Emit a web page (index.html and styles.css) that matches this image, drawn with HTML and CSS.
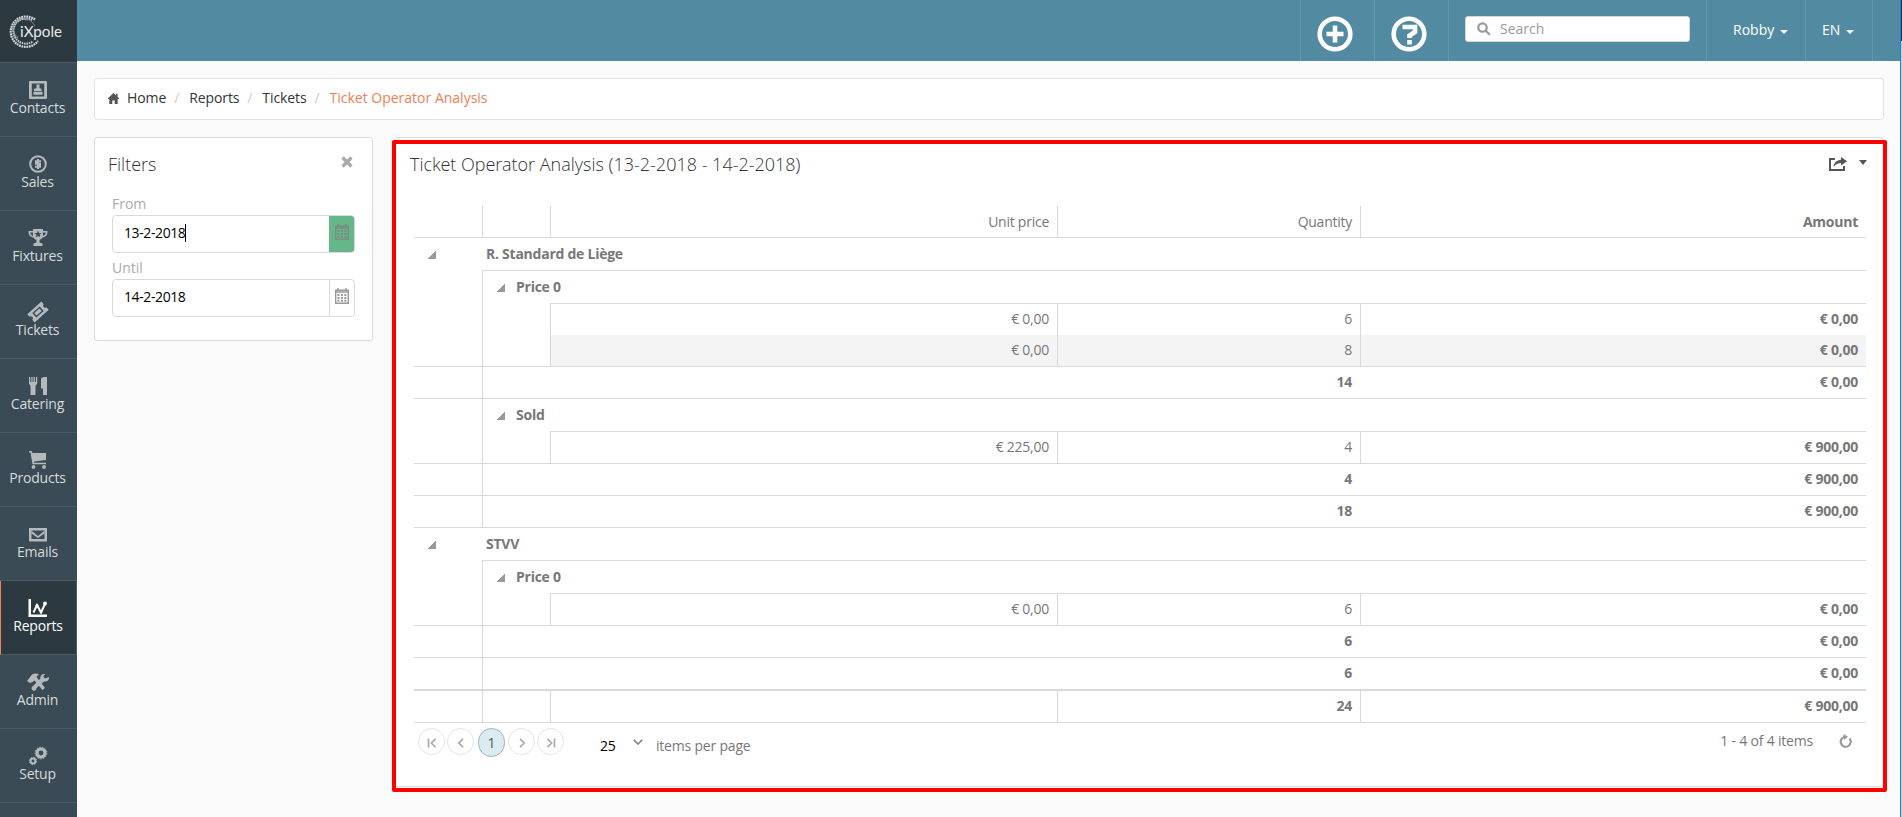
FILE: index.html
```
<!DOCTYPE html>
<html lang="en">
<head>
    <meta charset="UTF-8">
    <meta name="viewport" content="width=device-width, initial-scale=1.0">
    <title>iXpole - Ticket Operator Analysis</title>
    <link rel="stylesheet" href="styles.css">
</head>
<body>
    <div class="app">
        <aside class="sidebar">
            <a class="logo" href="#">
                <svg width="77" height="62" viewBox="0 0 77 62">
                    <g fill="none" stroke="#d3d8da">
                        <path d="M35 19.500A15.200 15.200 0 1 0 38 41" stroke-width="2.200" stroke-dasharray="1.800 .7"/>
                        <path d="M32 20A12.600 12.600 0 1 0 33 41.500" stroke-width="2" stroke-dasharray="1.600 .7" stroke="#c2c8cb"/>
                        <path d="M28 20A10.300 10.300 0 0 0 18 38" stroke-width="1.800" stroke-dasharray="1.300 .7" stroke="#9aa4a9"/>
                        <path d="M24 18Q31 19 35 26" stroke-width="1" stroke="#7f8b91"/>
                    </g>
                    <text class="logo-text" x="20" y="37" textLength="42" lengthAdjust="spacingAndGlyphs">iXpole</text>
                </svg>
            </a>
            <nav class="menu">
                <a href="#" class="menu-item">
                    <svg viewBox="0 0 18 18"><path fill-rule="evenodd" d="M1 0h16a1 1 0 0 1 1 1v16a1 1 0 0 1-1 1H1a1 1 0 0 1-1-1V1a1 1 0 0 1 1-1zm1.800 2.500v13h12.400v-13z"/><path d="M7.500 3.500h3v3.500l2 1v2H5V8l2.500-1zM4.500 10.800h9v3h-9z"/></svg>
                    <span>Contacts</span>
                </a>
                <a href="#" class="menu-item">
                    <svg viewBox="0 0 18 18"><circle cx="9" cy="9" r="7.800" class="line"/><path class="line" d="M12 6.200H7v2.600h4v2.900H6M9 4v10"/></svg>
                    <span>Sales</span>
                </a>
                <a href="#" class="menu-item">
                    <svg viewBox="0 0 18 18"><path fill-rule="evenodd" d="M4 0h10v2h4.500c0 4-1.500 6-5 6.500-1 1.500-2 2-3 2.500v2.500l3 1V17H4.500v-2.500l3-1V11c-1-.5-2-1-3-2.500C1 8-.5 6-.5 2H4zM1.200 3.500C1.500 5.500 2.500 6.500 4 7V3.500zM14 3.500V7c1.500-.5 2.500-1.500 2.800-3.500z"/><path class="cut" d="M9 1.500l1 2.400 2.600.2-2 1.700.7 2.500L9 7l-2.300 1.300.7-2.500-2-1.700 2.600-.2z"/></svg>
                    <span>Fixtures</span>
                </a>
                <a href="#" class="menu-item">
                    <svg viewBox="0 0 18 18"><g transform="rotate(-42 9 9)"><path fill-rule="evenodd" d="M-.5 3.500h19V7a2 2 0 0 0 0 4v3.500h-19V11a2 2 0 0 0 0-4zM4 6v6h10V6z"/><path d="M5.500 7.300h7v3.400h-7z"/></g></svg>
                    <span>Tickets</span>
                </a>
                <a href="#" class="menu-item">
                    <svg viewBox="0 0 18 18"><path d="M0 0h1.300v5h1V0h1.300v5h1V0h1.300v5h1V0h1.300v6.500L6.500 9v9h-5V9L0 6.500zM12 2.500C12 1 13.500 0 15 0h3v18h-4v-6.500h-2z"/></svg>
                    <span>Catering</span>
                </a>
                <a href="#" class="menu-item">
                    <svg viewBox="0 0 18 18"><path d="M0 0h2.800l.6 2H17v7L5 10.500l.2 1.300H17v1.500H3.500L1.500 1.500H0z"/><circle cx="4.500" cy="16" r="1.900"/><circle cx="15" cy="16" r="1.900"/></svg>
                    <span>Products</span>
                </a>
                <a href="#" class="menu-item">
                    <svg viewBox="0 0 18 18"><path fill-rule="evenodd" d="M0 3h18v13.500H0zm2.500 2.500V14h13V5.500z"/><path d="M2.500 5.800L9 11l6.500-5.200v2.700L9 13 2.500 8.500z"/></svg>
                    <span>Emails</span>
                </a>
                <a href="#" class="menu-item active">
                    <svg viewBox="0 0 18 18"><path d="M-.5 0H2v15.500h16V18H-.5z"/><path class="line" d="M4.500 13.500L8 6l4 7.500 4-8.500"/><circle cx="8" cy="6.500" r="1.500"/><circle cx="12" cy="13" r="1.300"/><circle cx="16" cy="4.500" r="1.900"/></svg>
                    <span>Reports</span>
                </a>
                <a href="#" class="menu-item">
                    <svg viewBox="0 0 18 18"><path d="M-2 8l5-6.500Q6 0 10 1L7.500 4l7.500 9.500 1 1.500-2.500 2L5.500 7.500 3.500 9 1 10z"/><path d="M4 13l7.500-7.500C11 2.500 13 .5 16.500 1L14 3.500l2 2L20 4c.5 3-2 5-5 4.500L7.500 15A2.500 2.500 0 1 1 4 13z"/></svg>
                    <span>Admin</span>
                </a>
                <a href="#" class="menu-item">
                    <svg viewBox="0 0 18 18"><circle cx="12" cy="6" r="4" class="gear"/><circle cx="12" cy="6" r="5.900" class="teeth"/><circle cx="4" cy="14" r="2.400" class="gear gear-sm"/><circle cx="4" cy="14" r="3.600" class="teeth"/></svg>
                    <span>Setup</span>
                </a>
            </nav>
        </aside>

        <div class="page">
            <header class="topbar">
                <a href="#" class="top-icon">
                    <svg width="36" height="36" viewBox="0 0 36 36"><circle cx="18" cy="18" r="15.300"/><path d="M18 9.500v17M9.500 18h17"/></svg>
                </a>
                <a href="#" class="top-icon">
                    <svg width="36" height="36" viewBox="0 0 36 36"><circle cx="18" cy="18" r="15.300"/><path d="M11.500 11h12.500v5l-5.500 3.500v2.500M18.500 24v4.500"/></svg>
                </a>
                <div class="search">
                    <div class="search-box">
                        <svg width="14" height="14" viewBox="0 0 14 14"><circle cx="5.500" cy="5.500" r="4.200"/><path d="M8.800 8.800l4 4"/></svg>
                        <span>Search</span>
                    </div>
                </div>
                <a href="#" class="top-user">Robby <i class="caret"></i></a>
                <a href="#" class="top-lang">EN <i class="caret"></i></a>
            </header>

            <ul class="breadcrumb">
                <li><svg width="11" height="11" viewBox="0 0 11 11"><path d="M5.500 0L8 2.300V.8h1.600v3L11 5.200V6H9.700v5H6.700V7.500H4.300V11H1.300V6H0v-.8z"/></svg><a href="#">Home</a></li>
                <li><a href="#">Reports</a></li>
                <li><a href="#">Tickets</a></li>
                <li class="current">Ticket Operator Analysis</li>
            </ul>

            <main class="content">
                <section class="filters">
                    <div class="filters-head">
                        <h2>Filters</h2>
                        <svg width="12" height="12" viewBox="0 0 12 12"><path d="M1.500 1.500l9 9M10.500 1.500l-9 9"/></svg>
                    </div>
                    <label>From</label>
                    <div class="datepicker focused">
                        <span class="date">13-2-2018<i class="cursor"></i></span>
                        <span class="picker-btn">
                            <svg width="14" height="16" viewBox="0 0 14 16"><path d="M.7 2.200h12.600v13H.7zM1 4h12" class="frame"/><path d="M3 0v2M11 0v2" class="frame"/><path d="M2.500 6.900h9M2.500 9.900h9M2.500 12.800h9" class="days"/></svg>
                        </span>
                    </div>
                    <label>Until</label>
                    <div class="datepicker">
                        <span class="date">14-2-2018</span>
                        <span class="picker-btn">
                            <svg width="14" height="16" viewBox="0 0 14 16"><path d="M.7 2.200h12.600v13H.7zM1 4h12" class="frame"/><path d="M3 0v2M11 0v2" class="frame"/><path d="M2.500 6.900h9M2.500 9.900h9M2.500 12.800h9" class="days"/></svg>
                        </span>
                    </div>
                </section>

                <section class="report">
                    <div class="report-head">
                        <h2>Ticket Operator Analysis (13-2-2018 - 14-2-2018)</h2>
                        <div class="report-tools">
                            <svg width="18" height="14" viewBox="0 0 18 14"><path d="M6 2H1v11h14V9" class="box"/><path d="M12 0l6 4.200-6 4.300V6C9 6 7 7 4.500 10 5 5.500 8 3 12 2.700z"/></svg>
                            <i class="caret"></i>
                        </div>
                    </div>

                    <table class="grid">
                        <colgroup>
                            <col class="col-group">
                            <col class="col-group">
                            <col class="col-price">
                            <col class="col-qty">
                            <col class="col-amount">
                        </colgroup>
                        <thead>
                            <tr>
                                <th></th>
                                <th></th>
                                <th>Unit price</th>
                                <th>Quantity</th>
                                <th class="strong">Amount</th>
                            </tr>
                        </thead>
                        <tbody>
                            <tr class="group">
                                <td><i class="toggle"></i></td>
                                <td colspan="4">R. Standard de Liège</td>
                            </tr>
                            <tr class="subgroup">
                                <td></td>
                                <td colspan="4"><i class="toggle"></i>Price 0</td>
                            </tr>
                            <tr class="item">
                                <td></td>
                                <td></td>
                                <td>€ 0,00</td>
                                <td>6</td>
                                <td>€ 0,00</td>
                            </tr>
                            <tr class="item alt">
                                <td></td>
                                <td></td>
                                <td>€ 0,00</td>
                                <td>8</td>
                                <td>€ 0,00</td>
                            </tr>
                            <tr class="total">
                                <td></td>
                                <td></td>
                                <td></td>
                                <td>14</td>
                                <td>€ 0,00</td>
                            </tr>
                            <tr class="subgroup next">
                                <td></td>
                                <td colspan="4"><i class="toggle"></i>Sold</td>
                            </tr>
                            <tr class="item">
                                <td></td>
                                <td></td>
                                <td>€ 225,00</td>
                                <td>4</td>
                                <td>€ 900,00</td>
                            </tr>
                            <tr class="total">
                                <td></td>
                                <td></td>
                                <td></td>
                                <td>4</td>
                                <td>€ 900,00</td>
                            </tr>
                            <tr class="total">
                                <td></td>
                                <td></td>
                                <td></td>
                                <td>18</td>
                                <td>€ 900,00</td>
                            </tr>
                            <tr class="group">
                                <td><i class="toggle"></i></td>
                                <td colspan="4">STVV</td>
                            </tr>
                            <tr class="subgroup">
                                <td></td>
                                <td colspan="4"><i class="toggle"></i>Price 0</td>
                            </tr>
                            <tr class="item">
                                <td></td>
                                <td></td>
                                <td>€ 0,00</td>
                                <td>6</td>
                                <td>€ 0,00</td>
                            </tr>
                            <tr class="total">
                                <td></td>
                                <td></td>
                                <td></td>
                                <td>6</td>
                                <td>€ 0,00</td>
                            </tr>
                            <tr class="total">
                                <td></td>
                                <td></td>
                                <td></td>
                                <td>6</td>
                                <td>€ 0,00</td>
                            </tr>
                        </tbody>
                        <tfoot>
                            <tr>
                                <td></td>
                                <td></td>
                                <td></td>
                                <td>24</td>
                                <td>€ 900,00</td>
                            </tr>
                        </tfoot>
                    </table>

                    <div class="pager">
                        <div class="pages">
                            <a href="#"><svg width="10" height="10" viewBox="0 0 10 10"><path d="M1.500 .5v9M8.500 .8L4.300 5l4.200 4.200"/></svg></a>
                            <a href="#"><svg width="10" height="10" viewBox="0 0 10 10"><path d="M7 .8L2.800 5 7 9.200"/></svg></a>
                            <a href="#" class="selected">1</a>
                            <a href="#"><svg width="10" height="10" viewBox="0 0 10 10"><path d="M3 .8L7.200 5 3 9.200"/></svg></a>
                            <a href="#"><svg width="10" height="10" viewBox="0 0 10 10"><path d="M8.500 .5v9M1.500 .8L5.700 5 1.500 9.200"/></svg></a>
                        </div>
                        <div class="page-size">
                            <span class="size">25</span>
                            <svg width="10" height="6" viewBox="0 0 10 6"><path d="M.8 .8L5 5 9.200 .8"/></svg>
                            <span>items per page</span>
                        </div>
                        <div class="pager-info">
                            <span>1 - 4 of 4 items</span>
                            <svg width="13" height="14" viewBox="0 0 13 14"><path d="M10.500 4.500A5 5 0 1 1 6 2.800" class="ring"/><path d="M4.500 0L9 2.800 5 6z"/></svg>
                        </div>
                    </div>
                    <div class="highlight"></div>
                </section>
            </main>
        </div>
        <div class="window-edge"></div>
    </div>
</body>
</html>
```
FILE: styles.css
```
* {
    box-sizing: border-box;
}
body {
    margin: 0;
    height: 817px;
    overflow: hidden;
    background: #fafafa;
    color: #333;
    font-family: "Open Sans", "Noto Sans", sans-serif;
    font-size: 14px;
    line-height: 19px;
}
a {
    color: inherit;
    text-decoration: none;
}
svg {
    display: block;
    flex: none;
}
.app {
    display: flex;
    height: 817px;
}

/* sidebar */
.sidebar {
    width: 77px;
    flex: none;
    background: #3a4b55;
}
.logo {
    display: block;
    height: 63px;
    background: #2c3940;
    border-bottom: 1px solid #4b5b63;
}
.logo-text {
    fill: #e6e9ea;
    font-family: "Lato", sans-serif;
    font-weight: 400;
    font-size: 15px;
}
.menu-item {
    display: flex;
    flex-direction: column;
    align-items: center;
    height: 74px;
    padding: 18px 2px 0 0;
    border-bottom: 1px solid #4b5b63;
    color: #d6dadc;
    letter-spacing: -0.2px;
}
.menu-item span {
    margin-top: -1px;
}
.menu-item svg {
    width: 18px;
    height: 18px;
    fill: #b3b9bd;
    overflow: visible;
}
.menu-item svg .line {
    fill: none;
    stroke: #b3b9bd;
    stroke-width: 2;
}
.menu-item svg .cut {
    fill: #3a4b55;
}
.menu-item svg .gear {
    fill: none;
    stroke: #b3b9bd;
    stroke-width: 3.2;
}
.menu-item svg .gear-sm {
    stroke-width: 2;
}
.menu-item svg .teeth {
    fill: none;
    stroke: #b3b9bd;
    stroke-width: 1;
    stroke-dasharray: 1.6 1.2;
}
.menu-item.active {
    padding-right: 1px;
    background: #2c3940;
    border-left: 1px solid #f0805f;
    border-right: 1px solid #4b5b63;
    color: #fff;
}
.menu-item.active svg {
    fill: #fff;
}
.menu-item.active svg .line {
    stroke: #fff;
}

/* top bar */
.page {
    width: 1823px;
    flex: none;
}
.topbar {
    display: flex;
    justify-content: flex-end;
    height: 61px;
    padding-right: 27px;
    background: #528ba1;
    color: #fff;
}
.topbar > * {
    border-left: 1px solid #6799ac;
}
.top-icon {
    width: 74px;
    padding: 16px 0 0 16px;
}
.top-icon svg {
    fill: none;
    stroke: #fff;
    stroke-width: 4.6;
}
.search {
    width: 258px;
    padding: 16px 0 0 16px;
}
.search-box {
    display: flex;
    align-items: center;
    gap: 9px;
    width: 225px;
    height: 26px;
    padding: 0 0 2px 11px;
    background: #fff;
    border: 1px solid #d5d9dc;
    border-radius: 3px;
    color: #999;
}
.search-box svg {
    margin-top: 2px;
    fill: none;
    stroke: #999;
    stroke-width: 2.2;
}
.top-user, .top-lang {
    display: flex;
    gap: 6px;
    padding-top: 20px;
}
.top-user {
    width: 99px;
    padding-left: 26px;
}
.top-lang {
    width: 68px;
    padding-left: 16px;
    border-right: 1px solid #6799ac;
}
.caret {
    width: 0;
    height: 0;
    margin-top: 10px;
    border: 0 solid transparent;
    border-width: 4px 4.5px 0;
    border-top-color: currentColor;
}

/* breadcrumb */
.breadcrumb {
    display: flex;
    height: 42px;
    margin: 17px 16px 17px 17px;
    padding: 9px 13px;
    list-style: none;
    background: #fff;
    border: 1px solid #e3e3e3;
    border-radius: 3px;
}
.breadcrumb li {
    display: flex;
}
.breadcrumb li + li::before {
    content: "/";
    width: 15px;
    padding-left: 8px;
    color: #ccc;
}
.breadcrumb svg {
    margin: 5px 8px 0 0;
    fill: #555;
}
.breadcrumb a {
    letter-spacing: -0.1px;
}
.breadcrumb .current {
    color: #ec7f58;
}

/* filters */
.content {
    display: flex;
    align-items: flex-start;
    gap: 21px;
    padding: 0 16px 0 17px;
}
.filters {
    width: 279px;
    height: 204px;
    flex: none;
    padding: 14px 17px;
    background: #fff;
    border: 1px solid #ddd;
    border-radius: 3px;
}
h2 {
    margin: 0;
    font-family: "Open Sans Light", "Open Sans", sans-serif;
    font-size: 18px;
    font-weight: 300;
    line-height: 25px;
    color: #333;
}
.filters-head {
    display: flex;
    justify-content: space-between;
    height: 42px;
    margin: 0 2px 0 -4px;
}
.filters-head svg {
    margin-top: 4px;
    fill: none;
    stroke: #aaa;
    stroke-width: 3.2;
}
.filters label {
    display: block;
    height: 21px;
    color: #aaa;
}
.datepicker {
    display: flex;
    width: 243px;
    height: 38px;
    margin-bottom: 5px;
    border: 1px solid #d9d9d9;
    border-radius: 4px;
    overflow: hidden;
}
.date {
    display: flex;
    flex: 1;
    padding: 7px 0 0 11px;
    color: #000;
    letter-spacing: -0.4px;
}
.cursor {
    width: 1px;
    height: 18px;
    margin-top: 1px;
    background: #000;
}
.picker-btn {
    width: 25px;
    padding: 8px 0 0 5px;
    border-left: 1px solid #d9d9d9;
}
.picker-btn svg {
    fill: none;
    stroke: #999;
}
.picker-btn .frame {
    stroke-width: 1.4;
}
.picker-btn .days {
    stroke-width: 2;
    stroke-dasharray: 2 1.4;
}
.focused .picker-btn {
    background: #65b688;
    border-color: #65b688;
}
.focused .picker-btn svg {
    stroke: #7b8c82;
}

/* report */
.report {
    position: relative;
    flex: 1;
    height: 650px;
    padding: 14px 17px 0 19px;
    background: #fff;
    border: 1px solid #ddd;
    border-radius: 3px;
}
.highlight {
    position: absolute;
    top: 2px;
    left: -3px;
    width: 1495px;
    height: 652px;
    border: 4px solid #f00;
    border-radius: 2px;
}
.report-head {
    display: flex;
    justify-content: space-between;
    height: 54px;
    margin: 0 -1px 0 -4px;
}
.report-tools {
    display: flex;
    gap: 12px;
    padding-top: 5px;
    color: #555;
}
.report-tools svg {
    fill: #555;
}
.report-tools .box {
    fill: none;
    stroke: #555;
    stroke-width: 2;
}
.report-tools .caret {
    margin-top: 3px;
    border-width: 5px 4.5px 0;
}
.grid {
    width: 1452px;
    table-layout: fixed;
    border-collapse: separate;
    border-spacing: 0;
    color: #777;
    letter-spacing: -0.25px;
}
.col-group {
    width: 68px;
}
.col-price {
    width: 507px;
}
.col-qty {
    width: 303px;
}
.col-amount {
    width: 506px;
}
.grid th, .grid td {
    height: 32px;
    padding: 0 8px;
    border: 0 solid #d9d9d9;
    border-top-width: 1px;
    font-weight: 400;
    line-height: 29px;
    text-align: right;
    vertical-align: top;
}
.grid th {
    height: 31px;
    border-top: 0;
    line-height: 31px;
}
.grid th + th, .grid .item td + td, .grid .subgroup td + td, .grid tfoot td + td {
    border-left-width: 1px;
}
.grid .strong, .grid td:last-child {
    font-weight: 700;
}
.grid .group td, .grid .subgroup td {
    height: 33px;
    text-align: left;
    line-height: 31px;
}
.grid .group td:first-child {
    padding-left: 14px;
}
.grid .group td:last-child {
    padding-left: 4px;
}
.grid .subgroup td:last-child {
    padding-left: 14px;
}
.grid .subgroup:not(.next) td:first-child,
.grid .item td:first-child,
.grid .item td:nth-child(2) {
    border-top-width: 0;
}
.grid .alt td {
    height: 31px;
    border-top-width: 0;
}
.alt td:nth-child(n+3) {
    background: #f4f4f4;
}
.grid .total td, .grid tfoot td {
    font-weight: 700;
}
.grid .total td:nth-child(2) {
    border-left-width: 1px;
}
.grid tfoot td {
    height: 34px;
    border-top-width: 2px;
    border-bottom-width: 1px;
}
.toggle {
    display: inline-block;
    width: 8px;
    height: 8px;
    background: linear-gradient(135deg, transparent 50%, #999 50%);
}
.subgroup .toggle {
    margin-right: 11px;
}

/* pager */
.pager {
    display: flex;
    height: 40px;
    padding: 5px 14px 0 4px;
    color: #777;
    letter-spacing: -0.2px;
}
.pages {
    display: flex;
    gap: 2px;
}
.pages a {
    display: flex;
    align-items: center;
    justify-content: center;
    width: 27px;
    height: 27px;
    border: 1px solid #e3e3e3;
    border-radius: 50%;
}
.pages svg {
    margin-top: 3px;
    fill: none;
    stroke: #aaa;
    stroke-width: 1.7;
}
.pages .selected {
    height: 29px;
    margin: 0 1px 0 2px;
    border-color: #a3b1b6;
    border-radius: 14px;
    background: #daecf1;
    color: #555;
}
.page-size {
    display: flex;
    padding: 8px 0 0 36px;
}
.page-size .size {
    width: 33px;
    color: #000;
}
.page-size svg {
    margin: 3px 13px 0 0;
    fill: none;
    stroke: #888;
    stroke-width: 1.7;
}
.pager-info {
    display: flex;
    gap: 26px;
    margin-left: auto;
    padding-top: 3px;
}
.pager-info svg {
    margin-top: 3px;
    fill: #999;
}
.pager-info .ring {
    fill: none;
    stroke: #999;
    stroke-width: 2.2;
}

/* strip of the window behind, right of the page */
.window-edge {
    width: 2px;
    height: 817px;
    border-left: 1px solid #1883d7;
    background: linear-gradient(#0f2a4d 41px, #b9d3e8 41px);
}
```
